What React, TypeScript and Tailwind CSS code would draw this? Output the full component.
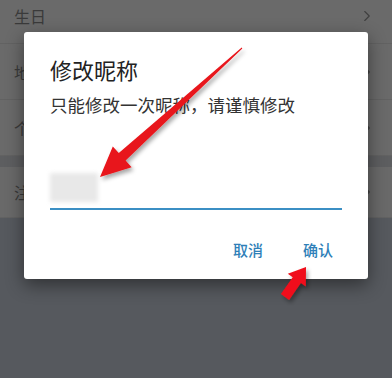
import { ChevronRight } from 'lucide-react';

const rows = [
  { label: '生日', h: 'h-[56px]' },
  { label: '地区', h: 'h-[56px]' },
  { label: '个性签名', h: 'h-[56px]' },
];

function Row({ label, h }: { label: string; h: string }) {
  return (
    <div className={`flex ${h} items-center justify-between border-b border-[#626262] pl-[14px] pr-[16px]`}>
      <span className="text-[16px] text-[#3a3a3a]">{label}</span>
      <ChevronRight size={18} strokeWidth={1.5} className="text-[#3f3f3f]" />
    </div>
  );
}

export default function App() {
  return (
    <div
      className="relative h-[378px] w-[392px] overflow-hidden bg-[#56595e]"
      style={{ fontFamily: '"Noto Sans CJK SC", "Noto Sans", sans-serif' }}
    >
      {/* dimmed page behind the dialog */}
      <div className="-mt-[12px] flex flex-col">
        <div className="bg-[#6a6a6a]">
          {rows.map((r) => (
            <Row key={r.label} label={r.label} h={r.h} />
          ))}
        </div>
        <div className="h-[11px] bg-[#5d5e60]" />
        <div className="bg-[#696969]">
          <Row label="注销账号" h="h-[51px]" />
        </div>
      </div>

      {/* dialog */}
      <div className="absolute left-[24px] top-[32px] flex h-[247px] w-[344px] flex-col rounded-[3px] bg-white px-[26px] pt-[22px] shadow-[0_6px_18px_rgba(0,0,0,0.45)]">
        <h2 className="text-[22px] leading-[30px] text-[#222]">修改昵称</h2>
        <p className="mt-[8px] text-[17.5px] leading-[26px] text-[#333]">只能修改一次昵称，请谨慎修改</p>
        <div className="mt-[55px] h-[29px] w-[48px] bg-[#e8e8e8] blur-[2px]" />
        <div className="mt-[6px] h-[2px] w-full bg-[#3b8fc4]" />
        <div className="mt-[29px] flex justify-end gap-[40px] pr-[9px] text-[15px] font-medium leading-[22px] text-[#2f7fb8]">
          <span>取消</span>
          <span>确认</span>
        </div>
      </div>

      {/* red annotation arrows */}
      <svg className="pointer-events-none absolute inset-0" width="392" height="378" viewBox="0 0 392 378">
        <defs>
          <filter id="sh" x="-20%" y="-20%" width="140%" height="140%">
            <feDropShadow dx="2" dy="3" stdDeviation="2" floodColor="#000" floodOpacity="0.35" />
          </filter>
        </defs>
        <polygon
          points="100,177 131.6,167.2 125.6,160.5 242.3,48.4 241.7,47.6 118.8,153.1 112.8,146.4"
          fill="#e8141a"
          filter="url(#sh)"
        />
        <polygon
          points="306,267 305.8,286.4 300.9,283 289.1,299.9 280.9,294.1 292.7,277.2 287.8,273.8"
          fill="#f0101a"
          filter="url(#sh)"
        />
      </svg>
    </div>
  );
}
